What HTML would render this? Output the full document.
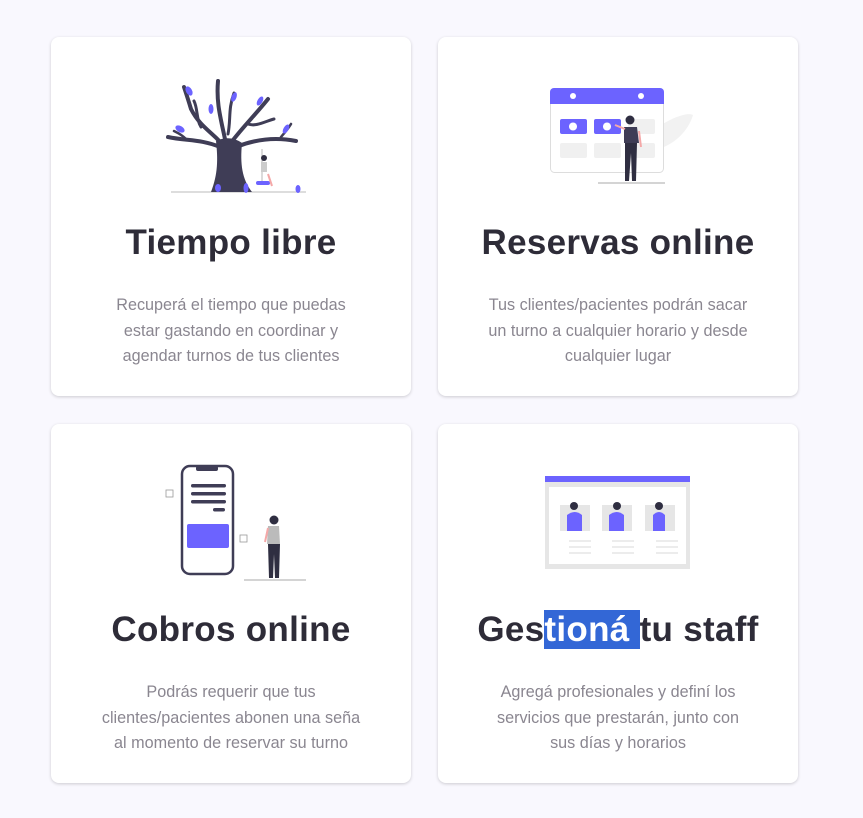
<!DOCTYPE html>
<html><head><meta charset="utf-8"><style>
*{margin:0;padding:0;box-sizing:border-box}
body{width:863px;height:818px;background:#f9f8fe;font-family:"Liberation Sans",sans-serif;position:relative;overflow:hidden}
.card{position:absolute;width:360px;height:359px;background:#fff;border-radius:8px;box-shadow:0 1px 3px rgba(0,0,0,.18);text-align:center}
.card svg{position:absolute;left:50%;transform:translateX(-50%)}
h2{position:absolute;left:0;right:0;top:186px;font-size:35px;font-weight:bold;color:#2e2c38;letter-spacing:0.3px}
p{position:absolute;left:50%;width:266px;margin-left:-133px;top:256px;font-size:16.2px;line-height:25.5px;color:#8a8690}
.hl{background:#3367d6;color:#fff}
</style></head><body>

<div class="card" style="left:51px;top:37px">
<svg style="top:42px" width="150" height="116" viewBox="0 0 150 116">
<line x1="15" y1="113" x2="150" y2="113" stroke="#bbb" stroke-width="1"/>
<g fill="none" stroke="#3f3d56" stroke-linecap="round">
<path d="M70 70 C60 55 45 50 35 30 C32 20 30 14 28 8" stroke-width="4"/>
<path d="M45 48 C40 40 42 30 38 22" stroke-width="3"/>
<path d="M70 65 C65 40 60 25 62 2" stroke-width="4"/>
<path d="M72 55 C75 40 72 30 78 14" stroke-width="3"/>
<path d="M74 65 C85 50 100 35 112 20" stroke-width="4"/>
<path d="M92 45 C100 48 110 42 118 40" stroke-width="3"/>
<path d="M80 68 C100 60 120 58 140 62" stroke-width="4"/>
<path d="M64 68 C45 60 30 62 12 58" stroke-width="4"/>
<path d="M125 58 C130 52 132 50 135 45" stroke-width="2.5"/>
<path d="M30 60 C25 55 22 54 18 52" stroke-width="2.5"/>
</g>
<path d="M55 113 C62 95 62 80 60 62 C68 58 78 58 86 64 C84 85 86 100 96 113 Z" fill="#3f3d56"/>
<g fill="#6c63ff">
<ellipse cx="33" cy="12" rx="3" ry="5" transform="rotate(-30 33 12)"/>
<ellipse cx="55" cy="30" rx="2.5" ry="5"/>
<ellipse cx="78" cy="18" rx="2.5" ry="5" transform="rotate(20 78 18)"/>
<ellipse cx="104" cy="22" rx="2.5" ry="5" transform="rotate(30 104 22)"/>
<ellipse cx="24" cy="50" rx="3" ry="5" transform="rotate(-60 24 50)"/>
<ellipse cx="130" cy="50" rx="2.5" ry="5" transform="rotate(30 130 50)"/>
<ellipse cx="62" cy="109" rx="3" ry="4"/><ellipse cx="90" cy="109" rx="2.5" ry="5"/><ellipse cx="142" cy="110" rx="2.5" ry="4"/>
<rect x="100" y="102" width="14" height="4" rx="2"/>
</g>
<line x1="106" y1="70" x2="106" y2="102" stroke="#999" stroke-width="0.7"/>
<circle cx="108" cy="79" r="3" fill="#2f2e41"/>
<rect x="105" y="83" width="6" height="10" fill="#ccc"/>
<path d="M112 95 l4 12" stroke="#f4a8a8" stroke-width="2"/>
</svg>
<h2>Tiempo libre</h2>
<p>Recuperá el tiempo que puedas estar gastando en coordinar y agendar turnos de tus clientes</p>
</div>

<div class="card" style="left:438px;top:37px">
<svg style="top:50px" width="150" height="98" viewBox="0 0 150 98">
<path d="M115 40 C130 30 145 25 150 28 C145 45 130 58 115 62 Z" fill="#f2f2f2"/>
<rect x="7.5" y="1.5" width="113" height="84" rx="4" fill="#fff" stroke="#ddd"/>
<path d="M11 1 h106 a4 4 0 0 1 4 4 v12 h-114 v-12 a4 4 0 0 1 4-4z" fill="#6c63ff"/>
<circle cx="30" cy="9" r="3" fill="#fff"/><circle cx="98" cy="9" r="3" fill="#fff"/>
<rect x="17" y="32" width="27" height="15" rx="2" fill="#6c63ff"/><circle cx="30" cy="39.5" r="4" fill="#fff"/>
<rect x="51" y="32" width="27" height="15" rx="2" fill="#6c63ff"/><circle cx="64" cy="39.5" r="4" fill="#fff"/>
<rect x="85" y="32" width="27" height="15" rx="2" fill="#f0f0f0"/>
<rect x="17" y="56" width="27" height="15" rx="2" fill="#f0f0f0"/><rect x="51" y="56" width="27" height="15" rx="2" fill="#f0f0f0"/><rect x="85" y="56" width="27" height="15" rx="2" fill="#f0f0f0"/>
<line x1="55" y1="96" x2="122" y2="96" stroke="#aaa"/>
<circle cx="87" cy="33" r="4.5" fill="#2f2e41"/>
<path d="M81 40 h13 l2 16 h-15z" fill="#3f3d56"/>
<path d="M82 56 h12 l-1 38 h-4 l-1-28 -2 28 h-4z" fill="#2f2e41"/>
<path d="M82 42 l-10-4" stroke="#f4a8a8" stroke-width="2"/>
<path d="M96 44 l2 16" stroke="#f4a8a8" stroke-width="2"/>
</svg>
<h2>Reservas online</h2>
<p>Tus clientes/pacientes podrán sacar un turno a cualquier horario y desde cualquier lugar</p>
</div>

<div class="card" style="left:51px;top:424px">
<svg style="top:40px" width="150" height="118" viewBox="0 0 150 118">
<rect x="10" y="26" width="7" height="7" fill="none" stroke="#999" stroke-width=".8"/>
<rect x="26" y="2" width="51" height="108" rx="8" fill="#fff" stroke="#3f3d56" stroke-width="2.5"/>
<rect x="40" y="2" width="22" height="5" rx="2" fill="#3f3d56"/>
<rect x="35" y="20" width="35" height="3.5" rx="1.7" fill="#3f3d56"/>
<rect x="35" y="28" width="35" height="3.5" rx="1.7" fill="#3f3d56"/>
<rect x="35" y="36" width="35" height="3.5" rx="1.7" fill="#3f3d56"/>
<rect x="57" y="44" width="12" height="3.5" rx="1.7" fill="#3f3d56"/>
<rect x="31" y="60" width="42" height="24" rx="2" fill="#6c63ff"/>
<rect x="84" y="71" width="7" height="7" fill="none" stroke="#999" stroke-width=".8"/>
<line x1="88" y1="116" x2="152" y2="116" stroke="#aaa"/>
<circle cx="118" cy="56" r="4.5" fill="#2f2e41"/>
<path d="M112 62 h11 l1 18 h-13z" fill="#bbb"/>
<path d="M112 80 h12 l-1 34 h-4 l-1-24 -1 24 h-4z" fill="#2f2e41"/>
<path d="M112 64 l-3 14" stroke="#f4a8a8" stroke-width="2"/>
</svg>
<h2>Cobros online</h2>
<p>Podrás requerir que tus clientes/pacientes abonen una seña al momento de reservar su turno</p>
</div>

<div class="card" style="left:438px;top:424px">
<svg style="top:52px" width="146" height="94" viewBox="0 0 146 94">
<rect x="0" y="0" width="145" height="93" fill="#e6e6e6"/>
<rect x="0" y="0" width="145" height="6" fill="#6c63ff"/>
<rect x="4" y="11" width="137" height="77" fill="#fff"/>
<g fill="#e6e6e6"><rect x="15" y="29" width="30" height="26"/><rect x="57" y="29" width="30" height="26"/><rect x="100" y="29" width="30" height="26"/></g>
<g fill="#6c63ff"><path d="M22 55 v-16 q8-6 15 0 v16z"/><path d="M64 55 v-16 q8-6 15 0 v16z"/><path d="M108 55 v-16 q6-6 12 0 v16z"/></g>
<circle cx="29" cy="30" r="4" fill="#2f2e41"/><circle cx="72" cy="30" r="4" fill="#2f2e41"/><circle cx="114" cy="30" r="4" fill="#2f2e41"/>
<g stroke="#e0e0e0" stroke-width="1.2"><path d="M24 65h22M24 71h22M24 77h22M67 65h22M67 71h22M67 77h22M111 65h22M111 71h22M111 77h22"/></g>
</svg>
<h2>Ges<span class="hl">tioná </span>tu staff</h2>
<p>Agregá profesionales y definí los servicios que prestarán, junto con sus días y horarios</p>
</div>

</body></html>
